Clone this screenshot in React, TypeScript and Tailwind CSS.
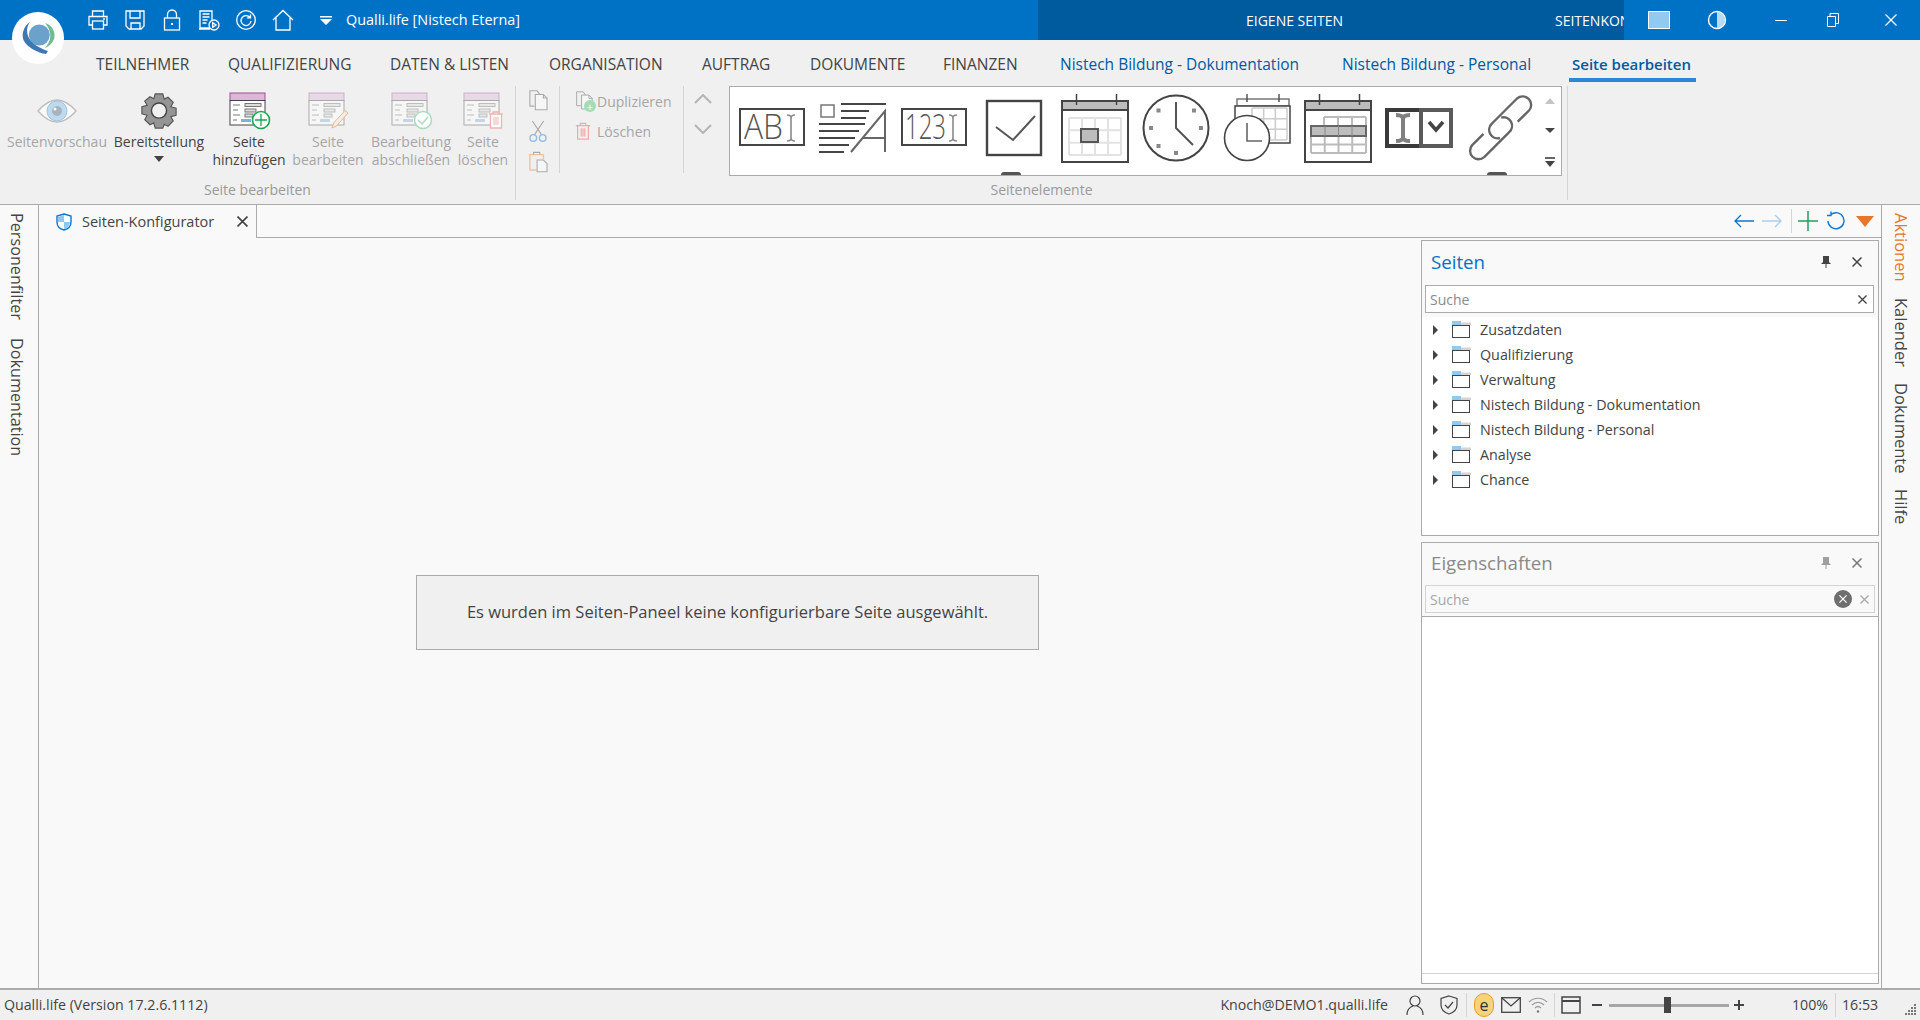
import { ReactNode } from 'react';

const menu = [
  { label: 'TEILNEHMER', w: 'w-[132px]' },
  { label: 'QUALIFIZIERUNG', w: 'w-[162px]' },
  { label: 'DATEN & LISTEN', w: 'w-[159px]' },
  { label: 'ORGANISATION', w: 'w-[153px]' },
  { label: 'AUFTRAG', w: 'w-[108px]' },
  { label: 'DOKUMENTE', w: 'w-[133px]' },
  { label: 'FINANZEN', w: 'w-[117px]' },
];

const pages = ['Zusatzdaten', 'Qualifizierung', 'Verwaltung', 'Nistech Bildung - Dokumentation', 'Nistech Bildung - Personal', 'Analyse', 'Chance'];

function Logo() {
  return (
    <svg viewBox="0 0 52 52" className="absolute left-[12px] top-[12px] z-10 h-[52px] w-[52px]">
      <circle cx="26" cy="26" r="26" fill="#fff" />
      <circle cx="27.3" cy="23" r="10.5" fill="#6aa2cc" />
      <path d="M18 10C11 14 9 24 12 29C15 35 26 41 34 42L36 39C30 37 22 33 19 29C14 23 14 15 18 10Z" fill="#3d78b5" />
      <path d="M33 11C41 13 44 22 42 27C40 32 36 35 33 36C37 31 39 27 38 21C37 16 35 13 33 11Z" fill="#6dbb8e" />
    </svg>
  );
}

function QatIcons() {
  const c = { fill: 'none', stroke: '#fff', strokeWidth: 1.3 };
  return (
    <div className="flex items-center gap-[15px]">
      <svg viewBox="0 0 22 22" className="h-[22px] w-[22px]" {...c}>
        <path d="M5.5 7V2h11v5M5.5 16H2V7.5h18V16h-3.5" />
        <rect x="5.5" y="12" width="11" height="8" />
        <path d="M16 10h2" />
      </svg>
      <svg viewBox="0 0 22 22" className="h-[22px] w-[22px]" {...c}>
        <path d="M2 2h18v15l-3 3H5l-3-3z" />
        <path d="M6 2v7h10V2M7 20v-6h9v6" />
      </svg>
      <svg viewBox="0 0 22 22" className="h-[22px] w-[22px]" {...c}>
        <rect x="3.5" y="9" width="15" height="12" />
        <path d="M6.5 9V5.5a4.5 4.5 0 0 1 9 0V9" />
        <path d="M11 14v2" strokeWidth="2" />
      </svg>
      <svg viewBox="0 0 22 22" className="h-[22px] w-[22px]" {...c}>
        <path d="M12 19H2V2h12v9M1 20h11" />
        <path d="M4.5 5h7M4.5 8h7M4.5 11h5M4.5 14h4" strokeWidth="1.6" />
        <circle cx="16" cy="16" r="5" />
        <path d="M14.7 13.8v4.4l3.4-2.2z" />
      </svg>
      <svg viewBox="0 0 22 22" className="h-[22px] w-[22px]" {...c}>
        <circle cx="11" cy="11" r="9.3" />
        <path d="M15 8.5A5 5 0 1 0 16 12M15.5 5.5v3.4h-3.4" />
      </svg>
      <svg viewBox="0 0 22 22" className="h-[22px] w-[22px]" {...c}>
        <path d="M1 11 11 1.5 21 11M4 9v12h14V9" />
      </svg>
    </div>
  );
}

function TitleBar() {
  return (
    <div className="flex h-10 shrink-0 items-center bg-[#0072c6] text-[14px] text-white">
      <div className="flex w-[1038px] items-center pl-[87px]">
        <QatIcons />
        <svg viewBox="0 0 12 9" className="ml-[26px] h-[9px] w-[12px]" fill="#fff">
          <path d="M0 0h12v1.5H0zM0 3h12L6 9z" />
        </svg>
        <span className="ml-[14px] text-[14.4px]">Qualli.life [Nistech Eterna]</span>
      </div>
      <div className="flex h-10 w-[586px] items-center overflow-hidden whitespace-nowrap bg-[#005a9e]">
        <span className="ml-[208px] w-[309px] shrink-0">EIGENE SEITEN</span>
        <span className="shrink-0">SEITENKONFIGURATOR</span>
      </div>
      <div className="flex flex-1 items-center">
        <div className="ml-[24px] h-[18px] w-[22px] border border-white bg-[#91c9f0]" />
        <svg viewBox="0 0 20 20" className="ml-[37px] h-5 w-5">
          <path d="M10 2a8 8 0 0 1 0 16z" fill="#b9daf3" />
          <circle cx="10" cy="10" r="8.5" fill="none" stroke="#fff" strokeWidth="1.4" />
        </svg>
        <div className="ml-[48px] h-[1px] w-[12px] bg-white" />
        <svg viewBox="0 0 12 14" className="ml-[40px] h-[14px] w-[12px]" fill="none" stroke="#fff">
          <path d="M.5 3.5h8v10h-8zM3 3.5v-3h8.5v10H8.500" />
        </svg>
        <svg viewBox="0 0 12 12" className="ml-[46px] h-[12px] w-[12px]" stroke="#fff" strokeWidth="1.2">
          <path d="M.5.5l11 11M11.500.5l-11 11" />
        </svg>
      </div>
    </div>
  );
}

function MenuBar() {
  return (
    <div className="flex h-[44px] shrink-0 bg-[#f0f0f0] pl-[96px] text-[15.5px] whitespace-nowrap text-[#444]">
      {menu.map((m) => (
        <div key={m.label} className={`${m.w} pt-[13px]`}>
          {m.label}
        </div>
      ))}
      <div className="w-[282px] pt-[13px] text-[#005a9e]">Nistech Bildung - Dokumentation</div>
      <div className="w-[227px] pt-[13px] text-[#005a9e]">Nistech Bildung - Personal</div>
      <div className="h-[42px] w-[127px] border-b-[4px] border-[#2b88d8] pl-[3px] pt-[13px] text-[15px] font-semibold text-[#005a9e]">Seite bearbeiten</div>
    </div>
  );
}

function FormIcon({ faded, children }: { faded?: boolean; children?: ReactNode }) {
  return (
    <svg viewBox="0 0 42 38" className="ml-[2px] h-[38px] w-[42px]">
      <g className={faded ? 'opacity-40' : ''}>
        <rect x="1" y="1" width="35" height="7.500" fill="#dcb8d8" stroke="#9b4f96" />
        <rect x="1" y="8.500" width="35" height="24.500" fill="#fff" stroke="#444" />
        <path d="M4 13h7M4 18h5M4 23h7M4 28h4" stroke="#777" />
        <rect x="16" y="11.500" width="16" height="3" fill="#ddd" stroke="#777" />
        <rect x="16" y="17" width="11" height="3" fill="#ddd" stroke="#777" />
        <rect x="16" y="22" width="8" height="3" fill="#ddd" stroke="#777" />
        <rect x="12" y="27" width="10" height="3" fill="#7fb0dc" />
      </g>
      {children}
    </svg>
  );
}

function RibbonItem({ lines, icon, w, disabled, arrow }: { lines: string[]; icon: ReactNode; w: string; disabled?: boolean; arrow?: boolean }) {
  return (
    <div className={`flex ${w} flex-col items-center ${disabled ? 'text-[#a6a6a6]' : 'text-[#444]'}`}>
      <div className="flex h-[44px] items-center justify-center">{icon}</div>
      {lines.map((l) => (
        <div key={l} className="whitespace-nowrap text-[14px] leading-[18px]">
          {l}
        </div>
      ))}
      {arrow && <div className="mt-[5px] h-0 w-0 border-x-[5px] border-t-[6px] border-x-transparent border-t-[#444]" />}
    </div>
  );
}

function EyeIcon() {
  return (
    <svg viewBox="0 0 40 24" className="h-[24px] w-[40px] opacity-70">
      <path d="M1 12C8 4 14 1 20 1s12 3 19 11c-7 8-13 11-19 11S8 20 1 12Z" fill="#fff" stroke="#aaa" strokeWidth="1.4" />
      <circle cx="20" cy="12" r="10" fill="#a9d2ee" stroke="#7fb0d8" />
      <circle cx="20" cy="12" r="5" fill="#8a9aa8" />
      <circle cx="18" cy="10" r="1.500" fill="#fff" />
    </svg>
  );
}

function GearIcon() {
  return (
    <svg viewBox="0 0 40 40" className="h-[38px] w-[38px]">
      <path
        d="M16 2h8l1.500 5.500 4-2 5.500 5.500-2.500 4.500 5.500 1.500v7.500l-5.500 1.500 2.500 4.500-5.500 5.500-4-2L24 38h-8l-1.500-5.500-4 2L5 29l2.500-4.500L2 23v-7.500l5.500-1.500L5 9.500 10.500 5l4 2z"
        fill="#959595"
        stroke="#555"
        strokeWidth="1.200"
      />
      <circle cx="20" cy="19.500" r="8" fill="#f0f0f0" stroke="#444" strokeWidth="1.500" />
    </svg>
  );
}

function CopyIcon({ className = 'h-[22px] w-[22px]' }: { className?: string }) {
  return (
    <svg viewBox="0 0 22 24" className={className} fill="none" stroke="#aaa" strokeWidth="1.200">
      <path d="M7 19H2V2h8l3 4" />
      <path d="M8 6h9l4 4v13H8z" fill="#f6f6f6" />
      <path d="M17 6v4h4" />
    </svg>
  );
}

function Group1() {
  return (
    <div className="mt-[2px] flex h-[114px] w-[516px] shrink-0 flex-col border-r border-[#d4d4d4]">
      <div className="flex h-[95px] pl-[2px] pt-[3px]">
        <RibbonItem w="w-[110px]" lines={['Seitenvorschau']} disabled icon={<EyeIcon />} />
        <RibbonItem w="w-[94px]" lines={['Bereitstellung']} arrow icon={<GearIcon />} />
        <RibbonItem
          w="w-[86px]"
          lines={['Seite', 'hinzufügen']}
          icon={
            <FormIcon>
              <circle cx="32" cy="28" r="8.500" fill="#fff" stroke="#14a650" strokeWidth="1.600" />
              <path d="M32 22v12M26 28h12" stroke="#14a650" strokeWidth="1.300" />
            </FormIcon>
          }
        />
        <RibbonItem
          w="w-[72px]"
          lines={['Seite', 'bearbeiten']}
          disabled
          icon={
            <FormIcon faded>
              <path d="M24 36l1.500-5L37 18.500l3 2.500L28.500 34z" fill="#fbeadf" stroke="#eeb58f" />
            </FormIcon>
          }
        />
        <RibbonItem
          w="w-[94px]"
          lines={['Bearbeitung', 'abschließen']}
          disabled
          icon={
            <FormIcon faded>
              <circle cx="32" cy="28" r="8.500" fill="#fff" stroke="#a9dcbb" strokeWidth="1.500" />
              <path d="M27 28l4 4 6-7" fill="none" stroke="#a9dcbb" strokeWidth="1.400" />
            </FormIcon>
          }
        />
        <RibbonItem
          w="w-[50px]"
          lines={['Seite', 'löschen']}
          disabled
          icon={
            <FormIcon faded>
              <path d="M26 22h14M30 22v-2h6v2M27.500 22v14h11V22" fill="#fff" stroke="#efb3b3" strokeWidth="1.300" />
              <path d="M31 25v8M33 25v8M35 25v8" stroke="#efb3b3" />
            </FormIcon>
          }
        />
      </div>
      <div className="text-center text-[14px] leading-[20px] text-[#9a9a9a]">Seite bearbeiten</div>
    </div>
  );
}

function ClipboardCol() {
  return (
    <div className="flex h-[87px] w-[44px] shrink-0 flex-col items-center gap-[9px] border-r border-[#d4d4d4] pt-[3px]">
      <CopyIcon />
      <svg viewBox="0 0 20 24" className="h-[23px] w-[20px]" fill="none">
        <path d="M4 1l10 15M16 1L6 16" stroke="#aaa" strokeWidth="1.200" />
        <circle cx="5" cy="19" r="3.500" stroke="#8fbde6" strokeWidth="1.500" />
        <circle cx="15" cy="19" r="3.500" stroke="#8fbde6" strokeWidth="1.500" />
      </svg>
      <svg viewBox="0 0 22 24" className="h-[22px] w-[22px]" fill="none" strokeWidth="1.200">
        <path d="M9 21H2V4h15v5" stroke="#f0c49f" strokeWidth="1.600" />
        <path d="M6 4V1.500h7V4" stroke="#aaa" />
        <path d="M10 10h7l4 4v9H10z" fill="#f6f6f6" stroke="#aaa" />
      </svg>
    </div>
  );
}

function DuplicateCol() {
  return (
    <div className="flex h-[87px] w-[124px] shrink-0 flex-col gap-[8px] border-r border-[#d4d4d4] pl-[15px] pt-[4px] text-[14px] text-[#a6a6a6]">
      <div className="flex h-[22px] items-center">
        <div className="relative h-[22px] w-[22px]">
          <CopyIcon className="h-[20px] w-[18px]" />
          <div className="absolute bottom-0 right-[1px] flex h-[12px] w-[12px] items-center justify-center rounded-full bg-[#a4dcb8] text-[11px] leading-none text-white">+</div>
        </div>
        <span>Duplizieren</span>
      </div>
      <div className="flex h-[22px] items-center">
        <svg viewBox="0 0 18 20" className="ml-[-1px] mr-[5px] h-[18px] w-[18px]" fill="none" stroke="#ecaaaa" strokeWidth="1.300">
          <path d="M1 4h16M6 4V1.500h6V4M3 4v15h12V4M7 7v9M9 7v9M11 7v9" />
        </svg>
        <span>Löschen</span>
      </div>
    </div>
  );
}

function ChevronCol() {
  return (
    <div className="flex h-[87px] w-[45px] shrink-0 flex-col items-center gap-[20px] pr-[7px] pt-[8px]">
      <svg viewBox="0 0 18 10" className="h-[10px] w-[18px]" fill="none" stroke="#b5b5b5" strokeWidth="2">
        <path d="M1 9l8-8 8 8" />
      </svg>
      <svg viewBox="0 0 18 10" className="h-[10px] w-[18px]" fill="none" stroke="#b5b5b5" strokeWidth="2">
        <path d="M1 1l8 8 8-8" />
      </svg>
    </div>
  );
}

function Grid({ x, y, w, h, cols, rows }: { x: number; y: number; w: number; h: number; cols: number; rows: number }) {
  const lines = [];
  for (let i = 0; i <= cols; i++) lines.push(<path key={`c${i}`} d={`M${x + (w * i) / cols} ${y}v${h}`} />);
  for (let i = 0; i <= rows; i++) lines.push(<path key={`r${i}`} d={`M${x} ${y + (h * i) / rows}h${w}`} />);
  return <g>{lines}</g>;
}

function IBeam({ x, y1, y2 }: { x: number; y1: number; y2: number }) {
  return <path d={`M${x - 4} ${y1}q4 0 4 3v${y2 - y1 - 6}q0 3-4 3M${x + 4} ${y1}q-4 0-4 3M${x + 4} ${y2}q-4 0-4-3`} fill="none" stroke="#8a8a8a" strokeWidth="1.600" />;
}

function GalleryIcon({ children }: { children: ReactNode }) {
  return (
    <div className="flex w-[81px] shrink-0 justify-center">
      <svg viewBox="0 0 70 70" className="h-[70px] w-[70px]">
        {children}
      </svg>
    </div>
  );
}

function CalendarFrame() {
  return (
    <>
      <rect x="2" y="8" width="66" height="9" fill="#bdbdbd" stroke="#444" strokeWidth="2" />
      <rect x="2" y="17" width="66" height="52" fill="#fff" stroke="#444" strokeWidth="2" />
      <path d="M16.500 1v11M56.500 1v11" stroke="#444" strokeWidth="1.500" />
    </>
  );
}

function Gallery() {
  return (
    <div className="relative flex h-[90px] w-[833px] shrink-0 items-start overflow-hidden border border-[#ababab] bg-white pt-[6px]">
      <GalleryIcon>
        <rect x="4" y="16" width="64" height="36" fill="none" stroke="#444" strokeWidth="2" />
        <text x="8" y="46" fontSize="34" fontWeight="300" fill="#555" textLength="39" lengthAdjust="spacingAndGlyphs">
          AB
        </text>
        <IBeam x={55} y1={22} y2={48} />
      </GalleryIcon>
      <GalleryIcon>
        <rect x="4" y="12" width="13" height="12" fill="none" stroke="#777" strokeWidth="1.500" />
        <path d="M24 11h45M24 18h28M24 25h25M2 31h46M2 38h40M2 45h36M2 52h30M2 59h25" stroke="#444" strokeWidth="2" />
        <path d="M34 59l34-41v41M46 45h22" fill="none" stroke="#666" strokeWidth="2" />
      </GalleryIcon>
      <GalleryIcon>
        <rect x="4" y="16" width="64" height="36" fill="none" stroke="#444" strokeWidth="2" />
        <text x="7" y="46" fontSize="34" fontWeight="300" fill="#555" textLength="41" lengthAdjust="spacingAndGlyphs">
          123
        </text>
        <IBeam x={55} y1={22} y2={48} />
      </GalleryIcon>
      <GalleryIcon>
        <rect x="8" y="8" width="54" height="54" fill="none" stroke="#444" strokeWidth="2.400" />
        <path d="M17 34l17 13 22-24" fill="none" stroke="#555" strokeWidth="2" />
      </GalleryIcon>
      <GalleryIcon>
        <CalendarFrame />
        <g stroke="#e2e2e2" strokeWidth="2" fill="none">
          <Grid x={9} y={25} w={52} h={37} cols={4} rows={3} />
        </g>
        <rect x="21" y="36" width="17" height="13" fill="#bdbdbd" stroke="#555" strokeWidth="2" />
      </GalleryIcon>
      <GalleryIcon>
        <circle cx="35" cy="35" r="32.500" fill="none" stroke="#444" strokeWidth="2" />
        <path d="M35 9v26l17 17" fill="none" stroke="#555" strokeWidth="2" />
        <g fill="#888">
          <rect x="15.500" y="15.500" width="4" height="4" />
          <rect x="51" y="15.500" width="4" height="4" />
          <rect x="8" y="33" width="4" height="4" />
          <rect x="58" y="33" width="4" height="4" />
          <rect x="15.500" y="51" width="4" height="4" />
          <rect x="33" y="58" width="4" height="4" />
        </g>
      </GalleryIcon>
      <GalleryIcon>
        <rect x="15" y="6" width="52" height="7" fill="#fff" stroke="#777" strokeWidth="1.500" />
        <rect x="13" y="13" width="55" height="37" fill="#fff" stroke="#444" strokeWidth="1.500" />
        <path d="M25 1v8M57 1v8" stroke="#555" strokeWidth="1.500" />
        <g stroke="#ccc" strokeWidth="1.500" fill="none">
          <Grid x={30} y={15} w={35} h={32} cols={3} rows={3} />
        </g>
        <circle cx="25" cy="45" r="22.500" fill="#fff" stroke="#444" strokeWidth="1.600" />
        <path d="M25 30v18h15" fill="none" stroke="#666" strokeWidth="1.600" />
      </GalleryIcon>
      <GalleryIcon>
        <CalendarFrame />
        <g stroke="#bbb" strokeWidth="2" fill="none">
          <Grid x={21} y={24} w={42} h={9} cols={3} rows={1} />
          <Grid x={8} y={43} w={55} h={17} cols={4} rows={2} />
        </g>
        <rect x="8" y="33" width="55" height="10" fill="#bdbdbd" stroke="#666" strokeWidth="2" />
        <path d="M22 33v10M35.500 33v10M49 33v10" stroke="#888" />
      </GalleryIcon>
      <GalleryIcon>
        <path d="M37 17H3v36h34" fill="none" stroke="#3a3a3a" strokeWidth="4" />
        <rect x="37" y="17" width="30" height="36" fill="none" stroke="#5a5a5a" strokeWidth="4" />
        <path d="M12 22q7 0 7 4v18q0 4-7 4M26 22q-7 0-7 4M26 48q-7 0-7-4" fill="none" stroke="#808080" strokeWidth="4" />
        <path d="M45 29l7 8 7-8" fill="none" stroke="#444" strokeWidth="3.500" />
      </GalleryIcon>
      <GalleryIcon>
        <g fill="none" stroke="#666" strokeWidth="2.400">
          <path d="M52.700 28.700L64 17.500A8.500 8.500 0 0 0 52 5.500L27 30.500A8.500 8.500 0 0 0 35 45" />
          <path d="M18.500 40.900L7.200 52.100A8.500 8.500 0 0 0 19.200 64.100L44.200 39.100A8.500 8.500 0 0 0 36.200 24.600" />
        </g>
      </GalleryIcon>
      <div className="flex w-[20px] shrink-0 flex-col items-center gap-[24px] pt-[5px]">
        <div className="h-0 w-0 border-x-[5px] border-b-[6px] border-x-transparent border-b-[#c4c4c4]" />
        <div className="h-0 w-0 border-x-[5px] border-t-[5px] border-x-transparent border-t-[#444]" />
        <div className="flex flex-col items-center gap-[2px]">
          <div className="h-[2px] w-[10px] bg-[#666]" />
          <div className="h-0 w-0 border-x-[5px] border-t-[6px] border-x-transparent border-t-[#444]" />
        </div>
      </div>
      <div className="absolute bottom-0 left-[271px] h-[3px] w-[20px] rounded-t-[10px] bg-[#555]" />
      <div className="absolute bottom-0 left-[757px] h-[3px] w-[20px] rounded-t-[10px] bg-[#555]" />
    </div>
  );
}

function Group2() {
  return (
    <div className="mt-[2px] flex h-[114px] w-[1052px] shrink-0 flex-col border-r border-[#d4d4d4]">
      <div className="flex h-[94px]">
        <ClipboardCol />
        <DuplicateCol />
        <ChevronCol />
        <Gallery />
      </div>
      <div className="text-center text-[14px] leading-[20px] text-[#9a9a9a]">Seitenelemente</div>
    </div>
  );
}

function VerticalLabel({ children, className = 'text-[16.5px] text-[#444]' }: { children: ReactNode; className?: string }) {
  return <div className={`whitespace-nowrap leading-[20px] [writing-mode:vertical-rl] ${className}`}>{children}</div>;
}

function CloseX({ className = 'h-[10px] w-[10px]', stroke = '#444' }: { className?: string; stroke?: string }) {
  return (
    <svg viewBox="0 0 10 10" className={className} stroke={stroke} strokeWidth="1.500">
      <path d="M.5.5l9 9M9.500.5l-9 9" />
    </svg>
  );
}

function Pin({ fill }: { fill: string }) {
  return (
    <svg viewBox="0 0 10 12" className="h-[12px] w-[10px]" fill={fill}>
      <path d="M2 0h6v6l2 2H5.500v4h-1V8H0l2-2z" />
    </svg>
  );
}

function TabBar() {
  return (
    <div className="flex h-[33px] shrink-0">
      <div className="flex w-[217px] shrink-0 items-center pl-[17px] text-[14.500px] text-[#444]">
        <svg viewBox="0 0 16 18" className="h-[18px] w-[16px]">
          <path d="M8 1l7 2v6c0 4-3 7-7 8-4-1-7-4-7-8V3z" fill="#fff" stroke="#0b78d0" strokeWidth="1.400" />
          <path d="M8 2v7H2V4zM8 9h6c0 3-2.500 6-6 7z" fill="#8cc8f0" />
        </svg>
        <span className="ml-[10px] w-[155px] whitespace-nowrap">Seiten-Konfigurator</span>
        <CloseX className="h-[11px] w-[11px]" />
      </div>
      <div className="flex flex-1 items-center justify-end border-b border-l border-[#ababab] pr-[7px]">
        <svg viewBox="0 0 20 14" className="h-[14px] w-[20px]" fill="none" stroke="#0b78d0" strokeWidth="1.300">
          <path d="M20 7H1M7 1L1 7l6 6" />
        </svg>
        <svg viewBox="0 0 20 14" className="ml-[8px] h-[14px] w-[20px]" fill="none" stroke="#a8d0ee" strokeWidth="1.300">
          <path d="M0 7h19M13 1l6 6-6 6" />
        </svg>
        <div className="ml-[9px] h-[24px] w-px bg-[#d4d4d4]" />
        <svg viewBox="0 0 20 20" className="ml-[6px] h-[20px] w-[20px]" stroke="#1aa35b" strokeWidth="1.500">
          <path d="M10 0v20M0 10h20" />
        </svg>
        <svg viewBox="0 0 20 20" className="ml-[8px] h-[20px] w-[20px]" fill="none" stroke="#0b78d0" strokeWidth="1.400">
          <path d="M5 3.500A8 8 0 1 1 2 10M5 .5v4H1" />
        </svg>
        <div className="ml-[10px] h-0 w-0 border-x-[9px] border-t-[11px] border-x-transparent border-t-[#e8752a]" />
      </div>
    </div>
  );
}

function PanelHeader({ title, titleClass, fill, close, h }: { title: string; titleClass: string; fill: string; close: string; h: string }) {
  return (
    <div className={`flex ${h} items-center pl-[9px] pr-[16px]`}>
      <span className={`mt-[-2px] flex-1 text-[18.7px] ${titleClass}`}>{title}</span>
      <div className="mt-[-2px] flex items-center">
        <Pin fill={fill} />
        <CloseX className="ml-[21px] h-[10px] w-[10px]" stroke={close} />
      </div>
    </div>
  );
}

function FolderIcon() {
  return (
    <svg viewBox="0 0 19 17" className="h-[17px] w-[19px]">
      <path d="M0 0h9v4H0z" fill="#91c9f0" />
      <path d="M9 1.500h10V4H9z" fill="#d4d4d4" />
      <rect x=".5" y="4.500" width="17" height="12" fill="#fff" stroke="#444" />
    </svg>
  );
}

function SeitenPanel() {
  return (
    <div className="flex h-[296px] shrink-0 flex-col border border-[#ababab]">
      <PanelHeader h="h-[44px]" title="Seiten" titleClass="text-[#0072c6]" fill="#444" close="#444" />
      <div className="ml-[3px] mr-[4px] flex h-[28px] items-center border border-[#ababab] bg-white pl-[4px] pr-[6px] text-[14px] text-[#8a8a8a]">
        <span className="flex-1">Suche</span>
        <CloseX className="h-[9px] w-[9px]" />
      </div>
      <div className="mt-[4px] flex-1 bg-white">
        {pages.map((p) => (
          <div key={p} className="flex h-[25px] items-center pl-[11px] text-[14.3px] text-[#444]">
            <div className="h-0 w-0 border-y-[5px] border-l-[5px] border-y-transparent border-l-[#444]" />
            <div className="ml-[14px]">
              <FolderIcon />
            </div>
            <span className="ml-[9px] whitespace-nowrap">{p}</span>
          </div>
        ))}
      </div>
    </div>
  );
}

function EigenschaftenPanel() {
  return (
    <div className="mt-[6px] mb-[4px] flex flex-1 flex-col border border-[#ababab]">
      <PanelHeader h="h-[42px]" title="Eigenschaften" titleClass="text-[#8a8a8a]" fill="#a0a0a0" close="#777" />
      <div className="mx-[3px] flex h-[28px] items-center border border-[#d4d4d4] pl-[4px] pr-[5px] text-[14px] text-[#a6a6a6]">
        <span className="flex-1">Suche</span>
        <div className="flex h-[18px] w-[18px] items-center justify-center rounded-full bg-[#6e6e6e]">
          <CloseX className="h-[8px] w-[8px]" stroke="#fff" />
        </div>
        <CloseX className="ml-[8px] h-[9px] w-[9px]" stroke="#aaa" />
      </div>
      <div className="mt-[3px] flex flex-1 flex-col border-t border-[#ababab] bg-white">
        <div className="flex-1" />
        <div className="h-[10px] border-t border-[#d4d4d4]" />
      </div>
    </div>
  );
}

function Sep({ ml = 'ml-[8px]' }: { ml?: string }) {
  return <div className={`${ml} h-[24px] w-px bg-[#d4d4d4]`} />;
}

function StatusBar() {
  return (
    <div className="flex h-[32px] shrink-0 items-center border-t-2 border-[#ababab] bg-[#f0f0f0] pl-[4px] text-[14.2px] text-[#444]">
      <span className="flex-1">Qualli.life (Version 17.2.6.1112)</span>
      <span>Knoch@DEMO1.qualli.life</span>
      <svg viewBox="0 0 18 20" className="ml-[18px] h-[20px] w-[18px]" fill="none" stroke="#444" strokeWidth="1.200">
        <circle cx="9" cy="6" r="5" />
        <path d="M1 20c0-5 3-8 6-9M17 20c0-5-3-8-6-9" />
      </svg>
      <svg viewBox="0 0 18 20" className="ml-[16px] h-[20px] w-[18px]" fill="none" stroke="#444" strokeWidth="1.200">
        <path d="M9 1l8 2.500V10c0 4-3.500 7.500-8 9-4.500-1.500-8-5-8-9V3.500z" />
        <path d="M5 10l3 3 5-6" />
      </svg>
      <Sep />
      <div className="ml-[7px] flex h-[24px] w-[20px] items-center justify-center rounded-full border border-[#e0a030] bg-[#f8d27a] text-[16px] leading-none text-[#333]">e</div>
      <svg viewBox="0 0 20 16" className="ml-[7px] h-[16px] w-[20px]" fill="none" stroke="#444" strokeWidth="1.300">
        <rect x=".7" y=".7" width="18.600" height="14.600" />
        <path d="M1 1l9 8 9-8" />
      </svg>
      <svg viewBox="0 0 20 20" className="ml-[7px] h-[20px] w-[20px]" fill="none" stroke="#9a9a9a" strokeWidth="1.200">
        <path d="M1 7c5-5 13-5 18 0M4 10c3.500-3.500 8.500-3.500 12 0M7 13c2-2 4-2 6 0" />
        <circle cx="10" cy="16.500" r="1.200" fill="#777" stroke="none" />
      </svg>
      <Sep ml="ml-[6px]" />
      <svg viewBox="0 0 20 20" className="ml-[6px] h-[20px] w-[20px]" fill="none" stroke="#444" strokeWidth="1.500">
        <rect x="1" y="2" width="18" height="16" />
        <path d="M1 6h18" strokeWidth="2" />
      </svg>
      <div className="ml-[11px] h-[2px] w-[10px] bg-[#444]" />
      <div className="ml-[7px] h-[3px] w-[55px] bg-[#a6a6a6]" />
      <div className="h-[16px] w-[7px] bg-[#444]" />
      <div className="h-[3px] w-[58px] bg-[#a6a6a6]" />
      <svg viewBox="0 0 10 10" className="ml-[5px] h-[10px] w-[10px]" stroke="#444" strokeWidth="2">
        <path d="M5 0v10M0 5h10" />
      </svg>
      <span className="w-[84px] text-right">100%</span>
      <Sep ml="ml-[7px]" />
      <span className="ml-[6px] w-[36px]">16:53</span>
      <svg viewBox="0 0 12 12" className="ml-[27px] mr-[3px] mt-[8px] h-[12px] w-[12px]" fill="#777">
        <rect x="9" y="1" width="2" height="2" />
        <rect x="6" y="4" width="2" height="2" />
        <rect x="9" y="4" width="2" height="2" />
        <rect x="3" y="7" width="2" height="2" />
        <rect x="6" y="7" width="2" height="2" />
        <rect x="9" y="7" width="2" height="2" />
        <rect x="0" y="10" width="2" height="2" />
        <rect x="3" y="10" width="2" height="2" />
        <rect x="6" y="10" width="2" height="2" />
        <rect x="9" y="10" width="2" height="2" />
      </svg>
    </div>
  );
}

export default function App() {
  return (
    <div className="relative flex h-[1020px] w-[1920px] flex-col overflow-hidden bg-[#f9f9f9] font-['Open_Sans',sans-serif]">
      <Logo />
      <TitleBar />
      <MenuBar />
      <div className="flex h-[121px] shrink-0 border-b border-[#ababab] bg-[#f0f0f0]">
        <Group1 />
        <Group2 />
      </div>
      <div className="flex min-h-0 flex-1">
        <div className="flex w-[39px] shrink-0 flex-col items-center gap-[18px] border-r border-[#ababab] pr-[4px] pt-[8px]">
          <VerticalLabel className="text-[16.2px] text-[#444]">Personenfilter</VerticalLabel>
          <VerticalLabel className="text-[16.2px] text-[#444]">Dokumentation</VerticalLabel>
        </div>
        <div className="flex min-w-0 flex-1 flex-col">
          <TabBar />
          <div className="flex min-h-0 flex-1">
            <div className="flex flex-1 items-center justify-center pb-[1px] pr-[5px]">
              <div className="flex h-[75px] w-[623px] items-center justify-center border border-[#ababab] bg-[#f0f0f0] text-[16.5px] text-[#444]">
                Es wurden im Seiten-Paneel keine konfigurierbare Seite ausgewählt.
              </div>
            </div>
            <div className="flex w-[460px] shrink-0 flex-col pr-[2px] pt-[2px]">
              <SeitenPanel />
              <EigenschaftenPanel />
            </div>
          </div>
        </div>
        <div className="flex w-[39px] shrink-0 flex-col items-center gap-[16px] border-l border-[#ababab] pt-[8px]">
          <VerticalLabel className="text-[16.5px] text-[#e8752a]">Aktionen</VerticalLabel>
          <VerticalLabel>Kalender</VerticalLabel>
          <VerticalLabel>Dokumente</VerticalLabel>
          <VerticalLabel>Hilfe</VerticalLabel>
        </div>
      </div>
      <StatusBar />
    </div>
  );
}
